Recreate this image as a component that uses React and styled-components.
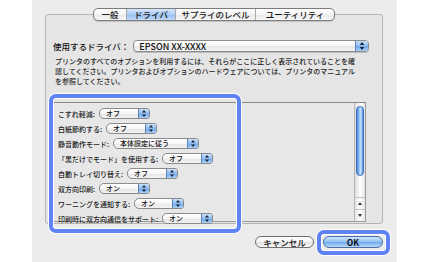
import React from 'react'
import styled, { createGlobalStyle } from 'styled-components'

/***************************************
  GLOBAL
***************************************/

const GlobalStyle = createGlobalStyle`
  html, body {
    margin: 0;
    padding: 0;
    background: #FFFFFF;
  }
  body {
    font-family: "Noto Sans CJK JP", "Noto Sans", sans-serif;
    font-weight: 500;
    color: #1a1a1a;
  }
`

/***************************************
  COMPONENTS
***************************************/

const Screen = styled.div`
  width: 430px;
  height: 262px;
  overflow: hidden;
  background: #FFFFFF;
`

const Sheet = styled.div`
  box-sizing: border-box;
  width: 365px;
  height: 262px;
  margin-left: 32px;
  padding: 8px 14px 0 13px;
  background: #ececec;
`

const TabBar = styled.div`
  position: relative;
  z-index: 1;
  display: flex;
  justify-content: center;
  height: 13px;
`

const TabGroup = styled.div`
  display: flex;
  box-sizing: border-box;
  height: 13px;
  border: 1px solid #7c7c7c;
  border-radius: 5px;
  overflow: hidden;
  background: linear-gradient(#ffffff, #f4f4f4 50%, #e9e9e9 51%, #f7f7f7);
  box-shadow: 0 1px 1px rgba(0, 0, 0, 0.15);
`

const Tab = styled.div`
  display: flex;
  align-items: center;
  justify-content: center;
  width: ${(p) => p.w}px;
  font-size: 8.5px;
  line-height: 1;
  white-space: nowrap;
  color: #111;
  & + & {
    border-left: 1px solid #a9a9a9;
  }
  ${(p) => p.active && `
    background: linear-gradient(#d6e7fc, #aacbf4 50%, #93bcf1 51%, #c2dbf8);
  `}
`

const Panel = styled.div`
  box-sizing: border-box;
  margin-top: -7px;
  height: 210px;
  border: 1px solid #b4b4b4;
  border-radius: 3px;
  background: #e5e5e5;
`

const DriverRow = styled.div`
  display: flex;
  align-items: center;
  margin: 25px 13px 0 7px;
`

const DriverLabel = styled.span`
  font-size: 8.5px;
  white-space: nowrap;
  margin-right: 4px;
  color: #111;
`

const Popup = styled.div`
  display: flex;
  align-items: center;
  box-sizing: border-box;
  flex: ${(p) => (p.w ? `0 0 ${p.w}px` : '1')};
  height: ${(p) => (p.big ? 12 : 11)}px;
  border: 1px solid #8b8b8b;
  border-radius: ${(p) => (p.big ? '4px' : '5px 3px 3px 5px')};
  background: linear-gradient(#ffffff, #f6f6f6 50%, #e6e6e6 51%, #f3f3f3);
  box-shadow: ${(p) => (p.big ? '0 1px 0 #bdbdbd' : 'none')};
  overflow: hidden;
`

const PopupValue = styled.span`
  flex: 1;
  padding-left: ${(p) => (p.big ? 5 : 6)}px;
  font-size: ${(p) => (p.big ? 9 : 7)}px;
  line-height: 1;
  white-space: nowrap;
  color: #111;
`

const Stepper = styled.div`
  display: flex;
  align-items: center;
  justify-content: center;
  width: ${(p) => (p.big ? 12 : 10)}px;
  height: 100%;
  border-left: 1px solid #5f82b6;
  background: linear-gradient(#c9e0fa, #8fbcf1 50%, #6ea7ec 51%, #a9d0f8);
`

const Description = styled.p`
  margin: 4px 0 0 9px;
  font-size: 7px;
  line-height: 10px;
  white-space: nowrap;
  color: #1e1e1e;
`

const ListBox = styled.div`
  position: relative;
  display: flex;
  box-sizing: border-box;
  width: 313px;
  height: 120px;
  margin: 16px 0 0 7px;
  border: 1px solid #9b9b9b;
  border-top-color: #8a8a8a;
  background: #e7e7e7;
`

const OptionList = styled.div`
  flex: 1;
  padding: 3px 0 0 4px;
`

const OptionRow = styled.div`
  display: flex;
  align-items: center;
  height: 15px;
`

const OptionLabel = styled.span`
  font-size: 7px;
  white-space: nowrap;
  margin-right: 4px;
  color: #1a1a1a;
`

const Scrollbar = styled.div`
  display: flex;
  flex-direction: column;
  align-items: stretch;
  width: 10px;
  border-left: 1px solid #b7b7b7;
  background: linear-gradient(90deg, #dcdcdc, #fafafa 45%, #ffffff 60%, #e2e2e2);
`

const Thumb = styled.div`
  box-sizing: border-box;
  height: 70px;
  margin: 3px 1px 0;
  border: 1px solid #3b6db9;
  border-radius: 4px;
  background: linear-gradient(90deg, #4a86dc, #9cc7f6 40%, #c3e0fc 60%, #5a95e2);
`

const Track = styled.div`
  flex: 1;
`

const ArrowCell = styled.div`
  display: flex;
  align-items: center;
  justify-content: center;
  height: 11px;
  border-top: 1px solid #c4c4c4;
  background: linear-gradient(90deg, #e4e4e4, #ffffff 50%, #e4e4e4);
`

const FocusRing = styled.div`
  position: absolute;
  left: -5px;
  top: -9px;
  width: 192px;
  height: 139px;
  box-sizing: border-box;
  border: 4px solid #5f82f5;
  border-radius: 7px;
  box-shadow: 0 0 0 1px #ffffff, inset 0 0 0 1px #ffffff;
  pointer-events: none;
`

const ButtonRow = styled.div`
  display: flex;
  justify-content: flex-end;
  gap: 9px;
  margin-top: 12px;
`

const Button = styled.button`
  position: relative;
  box-sizing: border-box;
  width: ${(p) => p.w}px;
  height: 12px;
  padding: 0;
  border: 1px solid ${(p) => (p.primary ? '#4a6ea6' : '#6f6f6f')};
  border-radius: 6px;
  font-family: "Noto Sans CJK JP", "Noto Sans", sans-serif;
  font-size: 8.5px;
  font-weight: ${(p) => (p.primary ? 700 : 500)};
  line-height: 1;
  color: #111;
  background: ${(p) => (p.primary
    ? 'linear-gradient(#cfe4fb, #8fc0f3 50%, #6eaaef 51%, #b8daf9)'
    : 'linear-gradient(#ffffff, #f3f3f3 50%, #e2e2e2 51%, #f6f6f6)')};
  ${(p) => p.highlighted && `
    &::after {
      content: '';
      position: absolute;
      top: -7px;
      left: -7px;
      right: -8px;
      bottom: -8px;
      border: 4px solid #5f82f5;
      border-radius: 7px;
      box-shadow: 0 0 0 1px #ffffff, inset 0 0 0 1px #ffffff;
      pointer-events: none;
    }
  `}
`

/***************************************
  ICONS
***************************************/

const StepArrows = ({ big }) => (
  <svg width={big ? 8 : 6} height={big ? 10 : 9} viewBox='0 0 6 9'>
    <polygon points='1,3.6 3,1 5,3.6' fill='#1b2433' />
    <polygon points='1,5.4 3,8 5,5.4' fill='#1b2433' />
  </svg>
)

const Arrow = ({ down }) => (
  <svg width='6' height='5' viewBox='0 0 6 5'>
    <polygon points={down ? '1,1 5,1 3,4' : '1,4 5,4 3,1'} fill='#333' />
  </svg>
)

/***************************************
  DATA
***************************************/

const tabs = [
  { label: '一般', w: 32 },
  { label: 'ドライバ', w: 48, active: true },
  { label: 'サプライのレベル', w: 79 },
  { label: 'ユーティリティ', w: 78 },
]

const options = [
  { label: 'こすれ軽減:', value: 'オフ', w: 51 },
  { label: '白紙節約する:', value: 'オフ', w: 51 },
  { label: '静音動作モード:', value: '本体設定に従う', w: 86 },
  { label: '「黒だけでモード」を使用する:', value: 'オフ', w: 51 },
  { label: '自動トレイ切り替え:', value: 'オフ', w: 51 },
  { label: '双方向印刷:', value: 'オン', w: 51 },
  { label: 'ワーニングを通知する:', value: 'オン', w: 50 },
  { label: '印刷時に双方向通信をサポート:', value: 'オン', w: 51 },
]

/***************************************
  MAIN
***************************************/

const App = () => {
  return (
    <Screen>
      <GlobalStyle />
      <Sheet>
        <TabBar>
          <TabGroup>
            {tabs.map((t) => (
              <Tab key={t.label} w={t.w} active={t.active}>{t.label}</Tab>
            ))}
          </TabGroup>
        </TabBar>

        <Panel>
          <DriverRow>
            <DriverLabel>使用するドライバ：</DriverLabel>
            <Popup big>
              <PopupValue big>EPSON XX-XXXX</PopupValue>
              <Stepper big><StepArrows big /></Stepper>
            </Popup>
          </DriverRow>

          <Description>
            プリンタのすべてのオプションを利用するには、それらがここに正しく表示されていることを確<br />
            認してください。プリンタおよびオプションのハードウェアについては、プリンタのマニュアル<br />
            を参照してください。
          </Description>

          <ListBox>
            <OptionList>
              {options.map((o) => (
                <OptionRow key={o.label}>
                  <OptionLabel>{o.label}</OptionLabel>
                  <Popup w={o.w}>
                    <PopupValue>{o.value}</PopupValue>
                    <Stepper><StepArrows /></Stepper>
                  </Popup>
                </OptionRow>
              ))}
            </OptionList>
            <Scrollbar>
              <Thumb />
              <Track />
              <ArrowCell><Arrow /></ArrowCell>
              <ArrowCell><Arrow down /></ArrowCell>
            </Scrollbar>
            <FocusRing />
          </ListBox>
        </Panel>

        <ButtonRow>
          <Button w={59}>キャンセル</Button>
          <Button w={60} primary highlighted>OK</Button>
        </ButtonRow>
      </Sheet>
    </Screen>
  )
}

/**************************************/

export default App
